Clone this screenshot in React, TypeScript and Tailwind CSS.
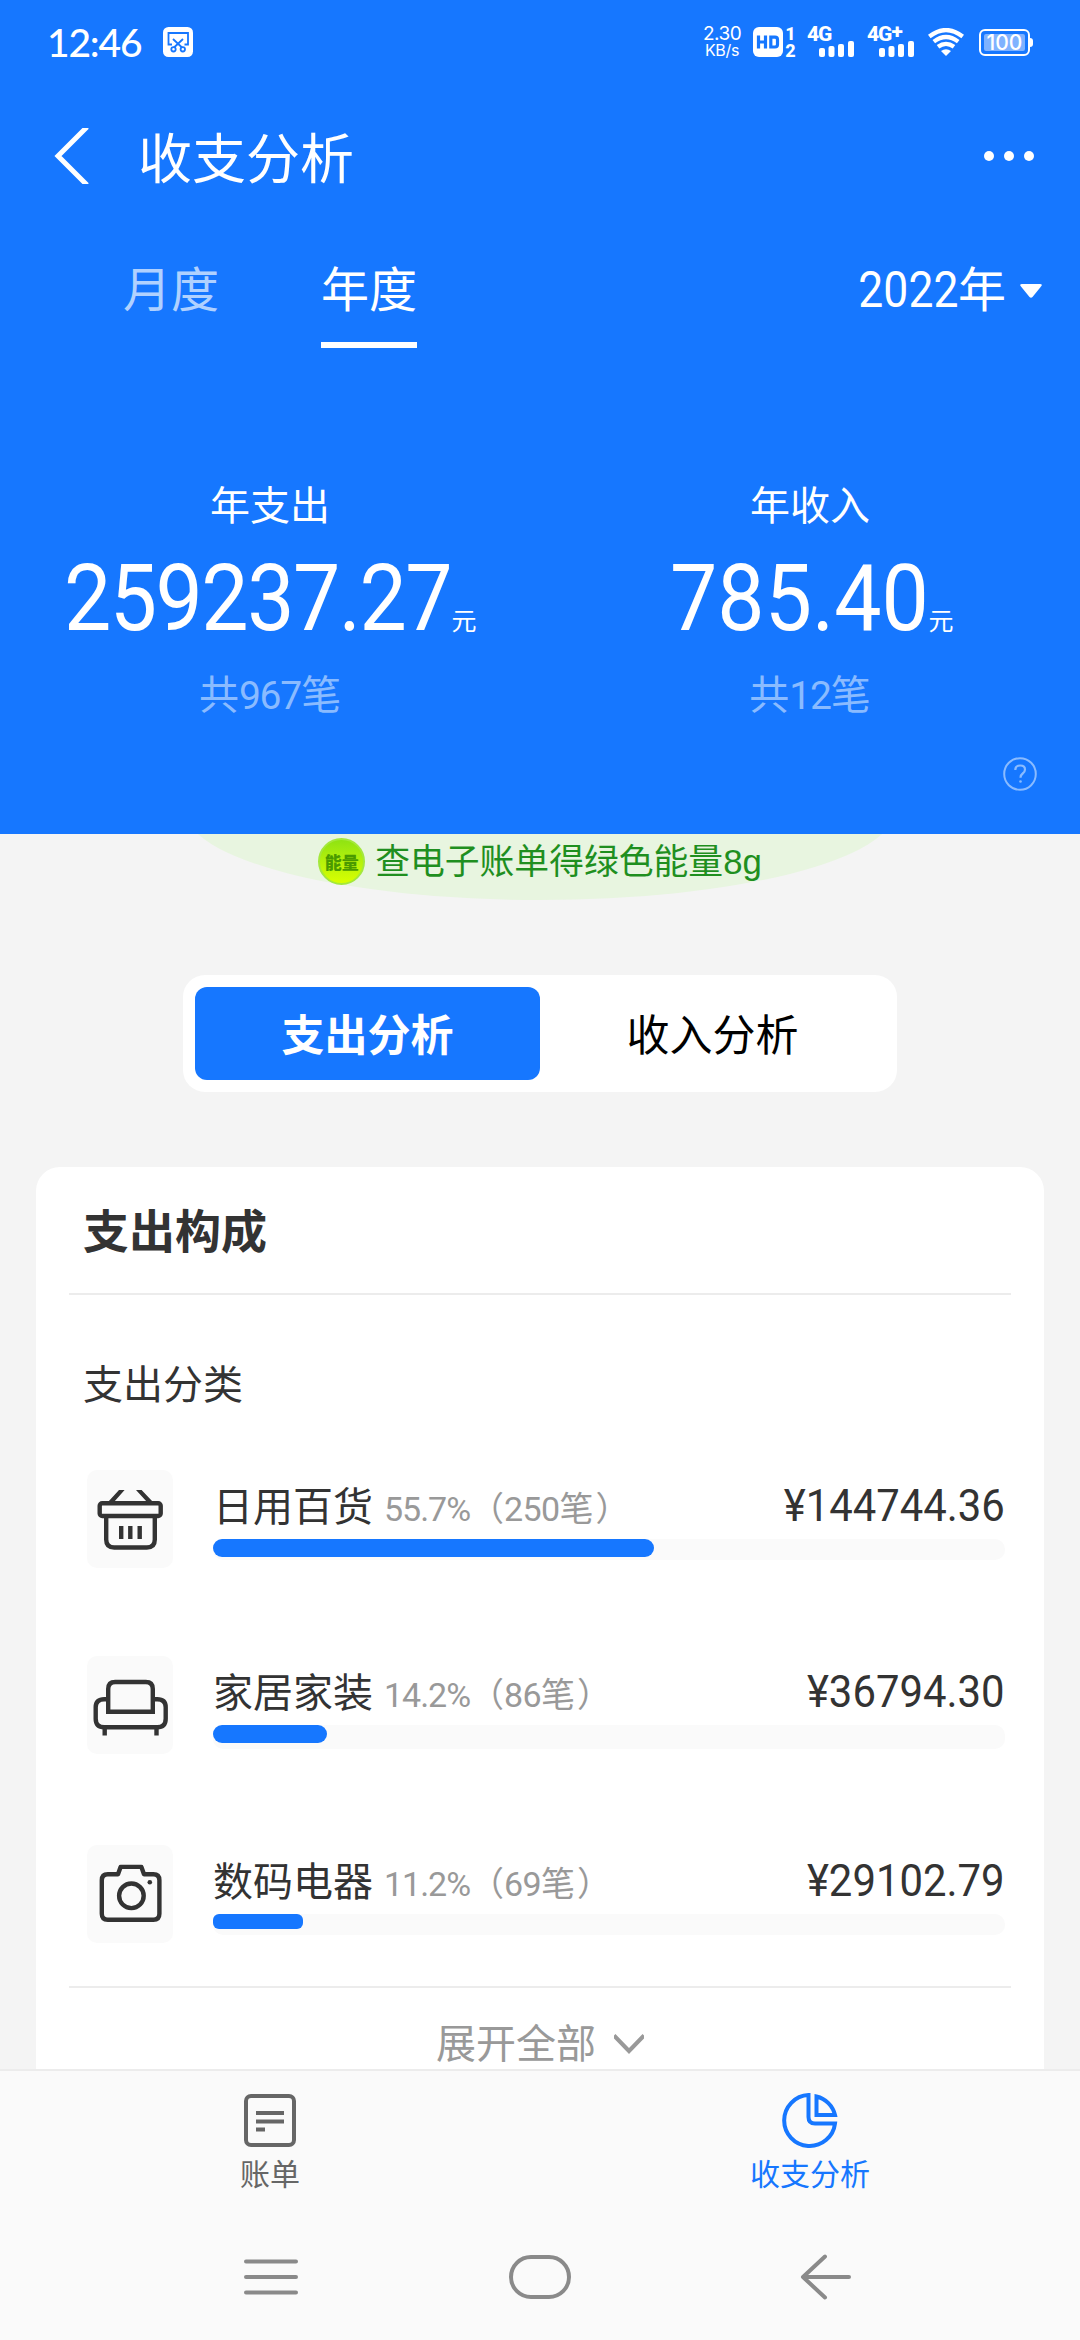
import React from 'react';

const cjk = 'font-["Noto_Sans_CJK_SC",sans-serif]';

type NumProps = { children: React.ReactNode; className?: string };

// Digits, big ones are squeezed with a scale-x class
const Num = ({ children, className = '' }: NumProps) => (
  <span className={`font-["Roboto","Noto_Sans_CJK_SC",sans-serif] ${className}`}>{children}</span>
);

const BasketIcon = () => (
  <svg viewBox="0 0 86 98" className="w-[86px] h-[98px]" fill="none" stroke="#333" strokeWidth="4.4">
    <rect x="12.7" y="33.2" width="61" height="12.8" rx="2.5" />
    <path d="M19.2 46v23.500q0 8 8 8h32.600q8 0 8-8V46" />
    <path d="M32 20h5.600L27 32h-6zM49 20h5.600L66 32h-6z" fill="#333" stroke="none" />
    <path d="M34.200 56v13M43.300 56v13M52.700 56v13" />
  </svg>
);

const SofaIcon = () => (
  <svg viewBox="0 0 86 98" className="w-[86px] h-[98px]" fill="none" stroke="#333" strokeWidth="4.4">
    <path d="M21.200 55.800V33q0-7 7-7h30.600q7 0 7 7v22.800z" />
    <path d="M21.200 43.200h-4q-8.500 0-8.500 8v11.500q0 8.500 8.500 8.500h53q8.500 0 8.500-8.500V51.200q0-8-8.500-8h-4" />
    <path d="M17.700 71v8.500M69.500 71v8.500" />
  </svg>
);

const CameraIcon = () => (
  <svg viewBox="0 0 86 98" className="w-[86px] h-[98px]" fill="none" stroke="#333" strokeWidth="4.4" strokeLinejoin="round">
    <path d="M31 29.300l2.600-7.400h20.800l2.600 7.400h9.400q6 0 6 6v33.500q0 6-6 6H20.800q-6 0-6-6V35.300q0-6 6-6z" />
    <circle cx="44.4" cy="50.8" r="12.3" />
    <circle cx="62.8" cy="37.2" r="2.3" fill="#333" stroke="none" />
  </svg>
);

const categories = [
  { name: '日用百货', percent: '55.7%', count: '250', amount: '¥144744.36', width: 441, Icon: BasketIcon, row: 'mb-[88px]', track: 'h-[21px]', bar: 'h-[18px] rounded-[9px]' },
  { name: '家居家装', percent: '14.2%', count: '86', amount: '¥36794.30', width: 114, Icon: SofaIcon, row: 'mb-[91px]', track: 'h-6', bar: 'h-[18px] rounded-[9px]' },
  { name: '数码电器', percent: '11.2%', count: '69', amount: '¥29102.79', width: 90, Icon: CameraIcon, row: 'mb-[43px]', track: 'h-[21px]', bar: 'h-[15px] rounded-[6px]' },
];

const Signal = ({ plus }: { plus?: boolean }) => (
  <div className="w-12 h-[30px] relative">
    <div className="absolute left-0 top-[-3px] flex text-[21px] leading-[21px] font-extrabold tracking-[-1px] font-['Roboto',sans-serif]">
      4G{plus && <span className="-mt-[3px]">+</span>}
    </div>
    <svg viewBox="0 0 48 30" className="w-12 h-[30px]" fill="white">
      <rect x="12" y="21" width="6" height="9" rx="2" />
      <rect x="21.5" y="19" width="6" height="11" rx="2" />
      <rect x="31" y="17" width="6" height="13" rx="2" />
      <rect x="41" y="14" width="6" height="16" rx="2" />
    </svg>
  </div>
);

const StatusBar = () => (
  <div className="h-[84px] flex items-center justify-between pl-[47px] pr-[47px]">
    <div className="flex items-center">
      <span className="w-[96px] text-[39px] leading-none font-medium tracking-[-1.2px] font-['Lato',sans-serif]">12:46</span>
      <svg viewBox="0 0 30 30" className="ml-5 w-[30px] h-[30px]" fill="none" stroke="#1677ff" strokeWidth="1.8">
        <rect width="30" height="30" rx="5.5" fill="white" stroke="none" />
        <path d="M9 17.500H5.500V6h19.500v11.500h-3.500" />
        <path d="M10 12l9 8.500M20 12l-9 8.500" />
        <circle cx="10.5" cy="22.3" r="2.2" />
        <circle cx="19.8" cy="22.3" r="2.2" />
      </svg>
    </div>
    <div className="flex items-center">
      <div className="w-[38px] text-center font-['Inter',sans-serif]">
        <div className="text-[19px] leading-[17px] tracking-[-0.5px]">2.30</div>
        <div className="text-[16px] leading-[17px] tracking-[-0.3px]">KB/s</div>
      </div>
      <svg viewBox="0 0 30 30" className="ml-3 w-[30px] h-[30px]" fill="none" stroke="#1677ff" strokeWidth="3.2">
        <rect width="30" height="30" rx="6" fill="white" stroke="none" />
        <path d="M5.500 8.500v13M12.500 8.500v13M5.500 15h7M17.800 10.200h4.200q2.500 0 2.500 2.500v4.800q0 2.500-2.500 2.500h-4.200z" />
      </svg>
      <div className="ml-0.5 w-[11px] text-center text-[18px] leading-[17px] font-extrabold font-['Roboto',sans-serif]">
        <div>1</div>
        <div>2</div>
      </div>
      <div className="ml-[11px] flex gap-3">
        <Signal />
        <Signal plus />
      </div>
      <svg viewBox="0 0 36 28" className="ml-[13px] w-9 h-7" fill="none" stroke="white" strokeWidth="4.2">
        <path d="M1.300 8.500Q18-4.500 34.700 8.500" />
        <path d="M5.800 13.700Q18 4.300 30.200 13.700" />
        <path d="M10 18.800Q18 12.800 26 18.800" />
        <path d="M13 23q5-3.600 10 0l-5 5z" fill="white" stroke="none" />
      </svg>
      <div className="ml-[15px] flex items-center">
        <div className="w-[51px] h-[27px] border-2 border-white rounded-[6px] p-[3px]">
          <div className="w-full h-full rounded-[2px] bg-[#7fb2ff] flex items-center justify-center text-[21px] leading-none font-medium font-['Inter',sans-serif]">100</div>
        </div>
        <div className="w-[3px] h-[9px] rounded-r-sm bg-white" />
      </div>
    </div>
  </div>
);

type SummaryProps = { label: string; amount: string; count: string; fit: string };

const Summary = ({ label, amount, count, fit }: SummaryProps) => (
  <div className="flex flex-col items-center">
    <div className="h-[60px] text-[40px] leading-[58px]">{label}</div>
    <div className="mt-[15px] h-[100px] flex items-baseline leading-[100px]">
      <Num className={`inline-block origin-right scale-x-[0.915] text-[92px] ${fit}`}>{amount}</Num>
      <span className="text-[25px]">元</span>
    </div>
    <div className="mt-[15px] h-[60px] text-[40px] leading-[56px] text-[#8abbff]">
      共<Num className="text-[39px] tracking-[-0.03em]">{count}</Num>笔
    </div>
  </div>
);

const App: React.FC = () => {
  return (
    <div className={`w-[1080px] h-[2340px] flex flex-col overflow-hidden bg-[#f4f4f4] text-[#333] ${cjk}`}>
      <header className="h-[834px] shrink-0 bg-[#1677ff] text-white flex flex-col">
        <StatusBar />

        <div className="h-36 flex items-center pl-[54px] pr-[46px]">
          <svg viewBox="0 0 36 56" className="w-9 h-14" fill="none" stroke="white" strokeWidth="5">
            <path d="M33 -1L4 28l29 29" />
          </svg>
          <h1 className="ml-[48px] text-[54px] leading-none">收支分析</h1>
          <div className="ml-auto flex gap-2.5">
            <span className="w-2.5 h-2.5 rounded-full bg-white" />
            <span className="w-2.5 h-2.5 rounded-full bg-white" />
            <span className="w-2.5 h-2.5 rounded-full bg-white" />
          </div>
        </div>

        <div className="h-[120px] flex pt-[34px] pl-[123px] pr-[38px] text-[48px] leading-[48px]">
          <div className="text-[#b0d1ff]">月度</div>
          <div className="ml-[102px] h-[86px] border-b-[6px] border-white">年度</div>
          <div className="ml-auto flex h-[50px]">
            <span><Num className="inline-block origin-right scale-x-[0.89] text-[50px]">2022</Num>年</span>
            <svg viewBox="0 0 22 14" className="ml-[14px] mt-[22px] w-[22px] h-[14px]" fill="white">
              <path d="M2 0h18q3 0 1 2.500l-8.500 10.500q-1.500 1.500-3 0L1 2.500Q-1 0 2 0z" />
            </svg>
          </div>
        </div>

        <div className="pt-[126px] grid grid-cols-2">
          <Summary label="年支出" amount="259237.27" count="967" fit="-ml-[35px] tracking-[-0.018em]" />
          <Summary label="年收入" amount="785.40" count="12" fit="-ml-[21px]" />
        </div>

        <svg viewBox="0 0 34 34" className="self-end mr-[43px] mt-[33px] w-[34px] h-[34px]" fill="none" stroke="#8abbff" strokeWidth="2">
          <circle cx="17" cy="17" r="15.8" />
          <path d="M12.300 13q0-4.500 5-4.500 4.700 0 4.700 4 0 2.300-2.300 4-2.200 1.600-2.200 4.200" strokeWidth="2.200" />
          <circle cx="17.5" cy="24.5" r="1.3" fill="#8abbff" stroke="none" />
        </svg>
      </header>

      <main className="h-[1235px] shrink-0 overflow-hidden">
        <div className="relative h-[66px] overflow-hidden">
          <div className="absolute left-[185px] bottom-0 w-[710px] h-[180px] rounded-[50%] bg-[#e8f5e0]" />
          <div className="relative flex items-center justify-center pt-[3px] text-[#1f8f1f]">
            <div className="w-[47px] h-[47px] rounded-full border-2 border-[#a4e83c] bg-linear-to-b from-[#8fe312] to-[#d8ff00] flex items-center justify-center text-[17px] font-black leading-none text-[#4a9a00]">
              能量
            </div>
            <div className="ml-2.5 text-[34.8px] leading-[49px] font-['Liberation_Sans','Noto_Sans_CJK_SC',sans-serif]">查电子账单得绿色能量8g</div>
          </div>
        </div>

        <div className="mt-[75px] mx-auto w-[714px] h-[117px] rounded-[22px] bg-white p-3 flex text-[43px] leading-[90px] text-center">
          <div className="flex-1 rounded-[12px] bg-[#1677ff] font-bold text-white">支出分析</div>
          <div className="flex-1 text-black">收入分析</div>
        </div>

        <section className="mt-[75px] mx-9 rounded-t-[24px] bg-white px-[33px]">
          <h2 className="h-[126px] pl-[14px] text-[46px] leading-[122px] font-bold">支出构成</h2>
          <div className="h-[2px] bg-[#ececec]" />
          <h3 className="h-[175px] pl-[14px] text-[40px] leading-[174px]">支出分类</h3>

          {categories.map(({ name, percent, count, amount, width, Icon, row, track, bar }) => (
            <div key={name} className={`flex pl-[18px] ${row}`}>
              <div className="h-[98px] rounded-[10px] bg-[#fafafa]">
                <Icon />
              </div>
              <div className="ml-10 w-[792px]">
                <div className="h-[69px] flex items-baseline text-[40px] leading-[69px]">
                  <span>{name}</span>
                  <span className="ml-[11px] text-[34px] text-[#999]">
                    <Num className="tracking-[-0.03em]">{percent}</Num>（<Num className="tracking-[-0.02em]">{count}</Num>笔<span className="ml-0.5">）</span>
                  </span>
                  <Num className="ml-auto inline-block origin-right scale-x-[0.93] text-[45px]">{amount}</Num>
                </div>
                <div className={`rounded-[10px] bg-[#fafafa] ${track}`}>
                  <div className={`bg-[#1677ff] ${bar}`} style={{ width }} />
                </div>
              </div>
            </div>
          ))}

          <div className="h-[2px] bg-[#ececec]" />
          <div className="h-28 flex items-center justify-center text-[40px] leading-none text-[#999]">
            <span className="-mt-1.5">展开全部</span>
            <svg viewBox="0 0 30 20" className="ml-[18px] w-[30px] h-5" fill="none" stroke="#999" strokeWidth="4">
              <path d="M0 1.500l15 15.500L30 1.500" />
            </svg>
          </div>
        </section>
      </main>

      <footer className="flex-1 border-t-2 border-[#ececec] bg-[#fafafa]">
        <nav className="grid grid-cols-2 pt-[21px] text-[30px] leading-[40px]">
          <div className="flex flex-col items-center text-[#666]">
            <svg viewBox="0 0 56 56" className="w-14 h-14" fill="none" stroke="#666" strokeWidth="4">
              <rect x="4" y="4" width="48" height="49" rx="5" />
              <path d="M14 21h28M14 29.500h28M14 37.500h9" />
            </svg>
            <span className="mt-1">账单</span>
          </div>
          <div className="flex flex-col items-center text-[#1677ff]">
            <svg viewBox="0 0 56 56" className="w-14 h-14" fill="none" stroke="#1677ff" strokeWidth="4">
              <path d="M26.500 3A25.500 25.500 0 1 0 53 31.500H33q-6.500 0-6.500-6.500z" />
              <path d="M34.500 4.500A25 25 0 0 1 53 23H34.500z" />
            </svg>
            <span className="mt-1">收支分析</span>
          </div>
        </nav>

        {/* system navigation keys */}
        <div className="mt-[62px] flex items-center pl-[244px]">
          <svg viewBox="0 0 54 46" className="w-[54px] h-[46px]" fill="none" stroke="#8a8a8a" strokeWidth="4" strokeLinecap="round">
            <path d="M2 7.500h50M2 23h50M2 38.500h50" />
          </svg>
          <svg viewBox="0 0 64 46" className="ml-[210px] w-16 h-[46px]" fill="none" stroke="#8a8a8a" strokeWidth="4">
            <rect x="3" y="3" width="58" height="40" rx="20" />
          </svg>
          <svg viewBox="0 0 54 46" className="ml-[227px] w-[54px] h-[46px]" fill="none" stroke="#8a8a8a" strokeWidth="4" strokeLinecap="round" strokeLinejoin="round">
            <path d="M26 2.500L4 23l22 20.500M4 23h46" />
          </svg>
        </div>
      </footer>
    </div>
  );
};

export default App;
